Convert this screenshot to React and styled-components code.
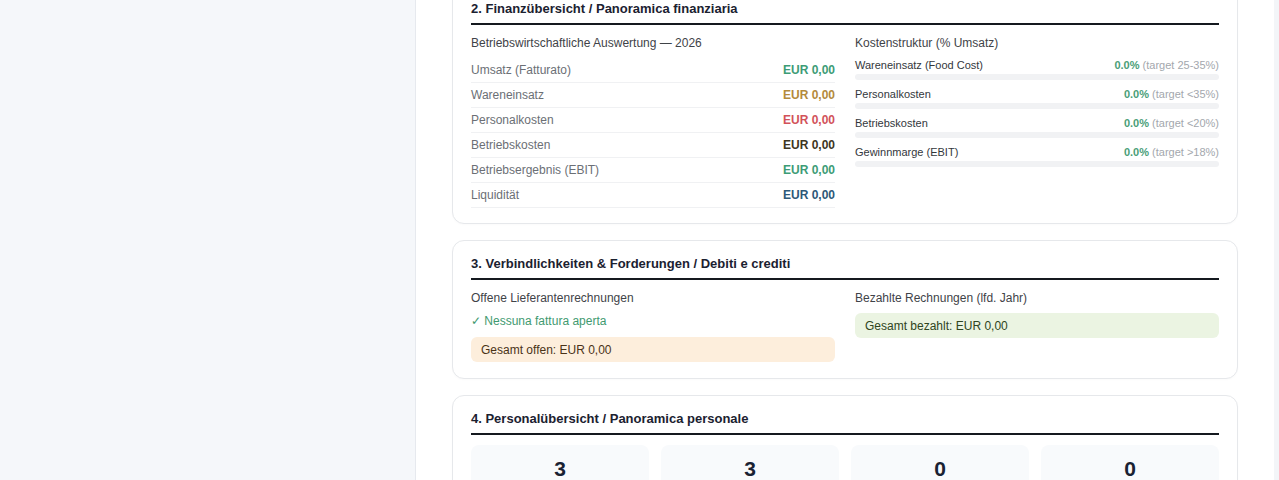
import React from 'react';
import styled, { createGlobalStyle } from 'styled-components';

const GlobalStyle = createGlobalStyle`
  html, body { margin: 0; padding: 0; height: 100%; overflow: hidden; }
  body { font-family: "Liberation Sans", Arial, sans-serif; background: #f3f5f8; }
`;

const Layout = styled.div`
  display: flex;
  height: 480px;
  overflow: hidden;
`;

const Sidebar = styled.aside`
  width: 415px;
  flex-shrink: 0;
  background: #f5f7fa;
  border-right: 1px solid #e6e9ee;
`;

const Main = styled.main`
  flex: 1;
  background: #ffffff;
  padding: 0 36px;
  margin-right: 5px;
  display: flex;
  flex-direction: column;
  gap: 16px;
`;

const Card = styled.section`
  background: #fff;
  border: 1px solid #e6e8eb;
  border-radius: 12px;
  padding: 15px 18px 16px;
  box-shadow: 0 1px 2px rgba(0, 0, 0, 0.02);
  &:first-child { margin-top: -15px; padding-bottom: 15px; }
`;

const Title = styled.h3`
  margin: 0 0 10px;
  padding-bottom: 6px;
  border-bottom: 2px solid #15191f;
  font-size: 13px;
  font-weight: 700;
  color: #1b2130;
  line-height: 16px;
`;

const Columns = styled.div`
  display: grid;
  grid-template-columns: 1fr 1fr;
  gap: 20px;
`;

const SubHead = styled.div`
  font-size: 12px;
  color: #3f4348;
  line-height: 16px;
  margin-bottom: ${p => p.$mb || 6}px;
`;

const Row = styled.div`
  display: flex;
  justify-content: space-between;
  align-items: center;
  height: 24px;
  border-bottom: 1px solid #f0f1f3;
  font-size: 12px;
`;

const Label = styled.span`
  color: #6b6f75;
`;

const Value = styled.span`
  font-weight: 700;
  color: ${p => p.$color};
`;

const CostItem = styled.div`
  margin-bottom: 7px;
`;

const CostLine = styled.div`
  display: flex;
  justify-content: space-between;
  font-size: 11px;
  line-height: 14px;
  color: #33373c;
`;

const Pct = styled.span`
  font-weight: 700;
  color: #4a9e78;
`;

const Target = styled.span`
  color: #a3a7ad;
`;

const Bar = styled.div`
  height: 6px;
  margin-top: 2px;
  border-radius: 3px;
  background: #f1f2f4;
`;

const Ok = styled.div`
  font-size: 12px;
  color: #3f9a70;
  line-height: 16px;
  margin-bottom: 8px;
`;

const Box = styled.div`
  background: ${p => p.$bg};
  color: ${p => p.$fg};
  border-radius: 6px;
  padding: 0 10px;
  height: 25px;
  display: flex;
  align-items: center;
  font-size: 12px;
`;

const Stats = styled.div`
  display: grid;
  grid-template-columns: repeat(4, 1fr);
  gap: 12px;
`;

const Stat = styled.div`
  background: #f8fafc;
  border-radius: 8px;
  padding: 12px 8px 14px;
  text-align: center;
`;

const StatNum = styled.div`
  font-size: 21px;
  font-weight: 700;
  color: #1a2233;
  line-height: 24px;
`;

const StatLabel = styled.div`
  font-size: 11px;
  color: #6b6f75;
  margin-top: 4px;
`;

const bwa = [
  ['Umsatz (Fatturato)', '#3d9c76'],
  ['Wareneinsatz', '#b38a3c'],
  ['Personalkosten', '#d2525a'],
  ['Betriebskosten', '#3d3522'],
  ['Betriebsergebnis (EBIT)', '#3d9c76'],
  ['Liquidität', '#2d5878'],
];

const costs = [
  ['Wareneinsatz (Food Cost)', 'target 25-35%'],
  ['Personalkosten', 'target <35%'],
  ['Betriebskosten', 'target <20%'],
  ['Gewinnmarge (EBIT)', 'target >18%'],
];

const staff = [
  ['3', 'Mitarbeiter gesamt'],
  ['3', 'Aktiv'],
  ['0', 'Minijob'],
  ['0', 'Teilzeit'],
];

export default function App() {
  return (
    <>
      <GlobalStyle />
      <Layout>
        <Sidebar />
        <Main>
          <Card>
            <Title>2. Finanzübersicht / Panoramica finanziaria</Title>
            <Columns>
              <div>
                <SubHead $mb={7}>Betriebswirtschaftliche Auswertung — 2026</SubHead>
                {bwa.map(([l, c]) => (
                  <Row key={l}>
                    <Label>{l}</Label>
                    <Value $color={c}>EUR 0,00</Value>
                  </Row>
                ))}
              </div>
              <div>
                <SubHead $mb={7}>Kostenstruktur (% Umsatz)</SubHead>
                {costs.map(([l, t]) => (
                  <CostItem key={l}>
                    <CostLine>
                      <span>{l}</span>
                      <span><Pct>0.0%</Pct> <Target>({t})</Target></span>
                    </CostLine>
                    <Bar />
                  </CostItem>
                ))}
              </div>
            </Columns>
          </Card>
          <Card>
            <Title>3. Verbindlichkeiten &amp; Forderungen / Debiti e crediti</Title>
            <Columns>
              <div>
                <SubHead $mb={7}>Offene Lieferantenrechnungen</SubHead>
                <Ok>✓ Nessuna fattura aperta</Ok>
                <Box $bg="#fdeedc" $fg="#4a3318">Gesamt offen: EUR 0,00</Box>
              </div>
              <div>
                <SubHead $mb={7}>Bezahlte Rechnungen (lfd. Jahr)</SubHead>
                <Box $bg="#ebf4e2" $fg="#2f4521">Gesamt bezahlt: EUR 0,00</Box>
              </div>
            </Columns>
          </Card>
          <Card>
            <Title>4. Personalübersicht / Panoramica personale</Title>
            <Stats>
              {staff.map(([n, l], i) => (
                <Stat key={i}>
                  <StatNum>{n}</StatNum>
                  <StatLabel>{l}</StatLabel>
                </Stat>
              ))}
            </Stats>
          </Card>
        </Main>
      </Layout>
    </>
  );
}
